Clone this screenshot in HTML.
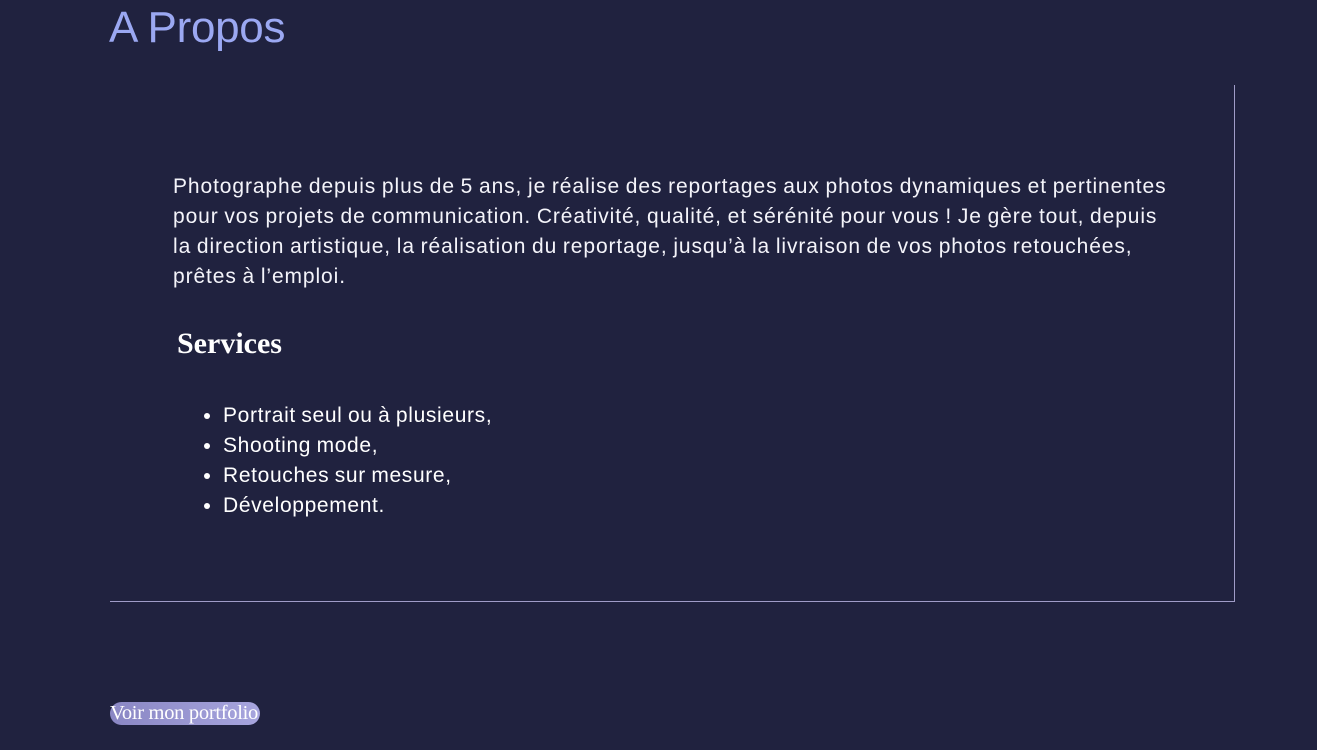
<!DOCTYPE html>
<html><head><meta charset="utf-8"><style>
html,body{margin:0;padding:0;background:#20223f;width:1317px;height:750px;overflow:hidden}
body{position:relative;font-family:"Liberation Sans",sans-serif;color:#fff}
h1{position:absolute;left:109px;top:3px;margin:0;font-size:44px;font-weight:normal;color:#9ba8f2;letter-spacing:-0.3px}
.box{position:absolute;left:110px;top:85px;width:1124px;height:516px;border-right:1px solid #a09cc8;border-bottom:1px solid #a09cc8}
p{position:absolute;left:173px;top:172px;margin:0;font-size:21px;line-height:30px;white-space:nowrap;letter-spacing:0.9px;word-spacing:-1px;color:#f4f4fa}
h2{position:absolute;left:177px;top:327px;margin:0;font-family:"Liberation Serif",serif;font-size:30px;font-weight:bold}
ul{position:absolute;left:183px;top:401px;margin:0;padding-left:40px;font-size:21px;line-height:30px;letter-spacing:0.65px;word-spacing:-1px}
.btn{position:absolute;left:110px;top:702px;height:23px;width:150px;border-radius:12px;background:linear-gradient(90deg,#8a87c4,#a7a5de);font-family:"Liberation Serif",serif;font-size:20.5px;line-height:23px;color:#fff;white-space:nowrap;letter-spacing:-0.3px}
</style></head><body>
<h1>A Propos</h1>
<div class="box"></div>
<p>Photographe depuis plus de 5 ans, je réalise des reportages aux photos dynamiques et pertinentes<br>pour vos projets de communication. Créativité, qualité, et sérénité pour vous ! Je gère tout, depuis<br>la direction artistique, la réalisation du reportage, jusqu’à la livraison de vos photos retouchées,<br>prêtes à l’emploi.</p>
<h2>Services</h2>
<ul><li>Portrait seul ou à plusieurs,</li><li>Shooting mode,</li><li>Retouches sur mesure,</li><li>Développement.</li></ul>
<div class="btn">Voir mon portfolio</div>
</body></html>
